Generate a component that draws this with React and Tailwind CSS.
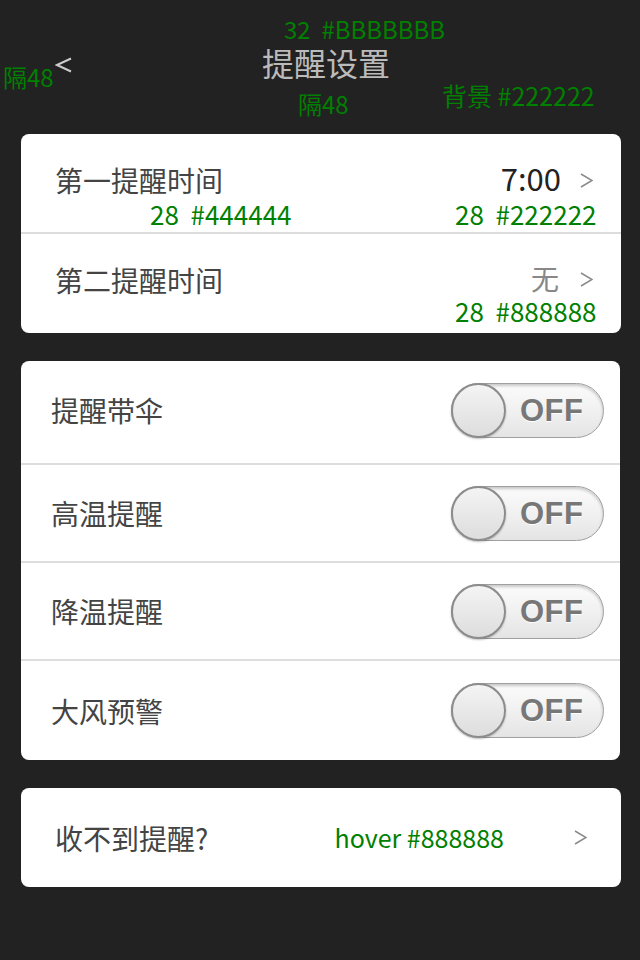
import React from "react";

const cjk = { fontFamily: '"Noto Sans CJK SC", "Noto Sans", sans-serif' };

function Chevron({ color = "#8a8a8a" }) {
  return (
    <svg width="13" height="17" viewBox="0 0 13 17" className="shrink-0">
      <polyline points="1,2 12,8.5 1,15" fill="none" stroke={color} strokeWidth="1.5" />
    </svg>
  );
}

function Toggle() {
  return (
    <div className="relative w-[153px] h-[55px] rounded-full border-[1.5px] border-[#a0a0a0] bg-gradient-to-b from-[#fbfbfb] via-[#f1f1f1] to-[#e4e4e4] shadow-[inset_0_2px_3px_rgba(0,0,0,0.2)] flex items-center">
      <div className="absolute left-[-1px] top-[-1px] w-[55px] h-[55px] rounded-full border-2 border-[#8c8c8c] bg-gradient-to-b from-[#f4f4f4] to-[#dddddd] shadow-[0_1px_2px_rgba(0,0,0,0.25)]" />
      <span
        className="ml-[68px] text-[31px] font-bold text-[#777777] leading-none tracking-[0.5px] [text-shadow:0_1px_0_#ffffff]"
        style={{ fontFamily: '"Liberation Sans", Arial, sans-serif' }}
      >
        OFF
      </span>
    </div>
  );
}

const green = "absolute text-[#008000] leading-none whitespace-nowrap";

export default function App() {
  return (
    <div className="relative w-[640px] h-[960px] bg-[#222222] overflow-hidden" style={cjk}>
      {/* header */}
      <div className="relative h-[134px] flex items-start justify-center">
        <div className="absolute left-[55px] top-[57px]">
          <svg width="18" height="16" viewBox="0 0 18 16">
            <polyline points="16,1.5 2,8 16,14.5" fill="none" stroke="#cccccc" strokeWidth="2" />
          </svg>
        </div>
        <div className="mt-[46px] ml-[12px] text-[32px] leading-none text-[#BBBBBB]">提醒设置</div>
        <div className={green + " left-[284px] top-[17px] text-[24px]"}>32&nbsp; #BBBBBBB</div>
        <div className={green + " left-[3px] top-[65px] text-[24px]"}>隔48</div>
        <div className={green + " left-[298px] top-[92px] text-[24px]"}>隔48</div>
        <div className={green + " left-[442px] top-[83px] text-[25px]"}>背景 #222222</div>
      </div>

      {/* card 1 */}
      <div className="ml-[21px] w-[600px] bg-white rounded-[8px] flex flex-col">
        <div className="relative h-[100px] flex items-center pl-[34px] pr-[28px] pb-[6px] border-b-2 border-[#dddddd]">
          <span className="text-[28px] text-[#444444] leading-none">第一提醒时间</span>
          <span className="ml-auto mb-[6px] text-[31px] text-[#222222] leading-none mr-[19px]">7:00</span>
          <Chevron />
          <div className={green + " left-[129px] top-[67px] text-[26px]"}>28&nbsp; #444444</div>
          <div className={green + " left-[434px] top-[67px] text-[26px]"}>28&nbsp; #222222</div>
        </div>
        <div className="relative h-[99px] flex items-center pl-[34px] pr-[28px] pb-[8px]">
          <span className="text-[28px] text-[#444444] leading-none">第二提醒时间</span>
          <span className="ml-auto mb-[4px] text-[28px] text-[#888888] leading-none mr-[21px]">无</span>
          <Chevron />
          <div className={green + " left-[434px] top-[64px] text-[26px]"}>28&nbsp; #888888</div>
        </div>
      </div>

      {/* card 2 */}
      <div className="ml-[21px] mt-[28px] w-[599px] bg-white rounded-[8px] flex flex-col">
        {["提醒带伞", "高温提醒", "降温提醒", "大风预警"].map((t, i) => (
          <div
            key={t}
            className={
              "flex items-center pl-[30px] pr-[16px] " +
              (i === 0 ? "h-[104px] pb-[4px] " : i === 3 ? "h-[99px] " : "h-[98px] ") +
              (i < 3 ? "border-b-2 border-[#dddddd]" : "")
            }
          >
            <span className="text-[28px] text-[#444444] leading-none">{t}</span>
            <div className="ml-auto">
              <Toggle />
            </div>
          </div>
        ))}
      </div>

      {/* card 3 */}
      <div className="relative ml-[21px] mt-[28px] w-[600px] h-[99px] bg-white rounded-[8px] flex items-center pl-[34px] pr-[34px]">
        <span className="text-[28px] text-[#444444] leading-none">收不到提醒?</span>
        <span className="ml-auto mr-[70px] text-[25px] text-[#008000] leading-none">hover #888888</span>
        <Chevron />
      </div>
    </div>
  );
}
